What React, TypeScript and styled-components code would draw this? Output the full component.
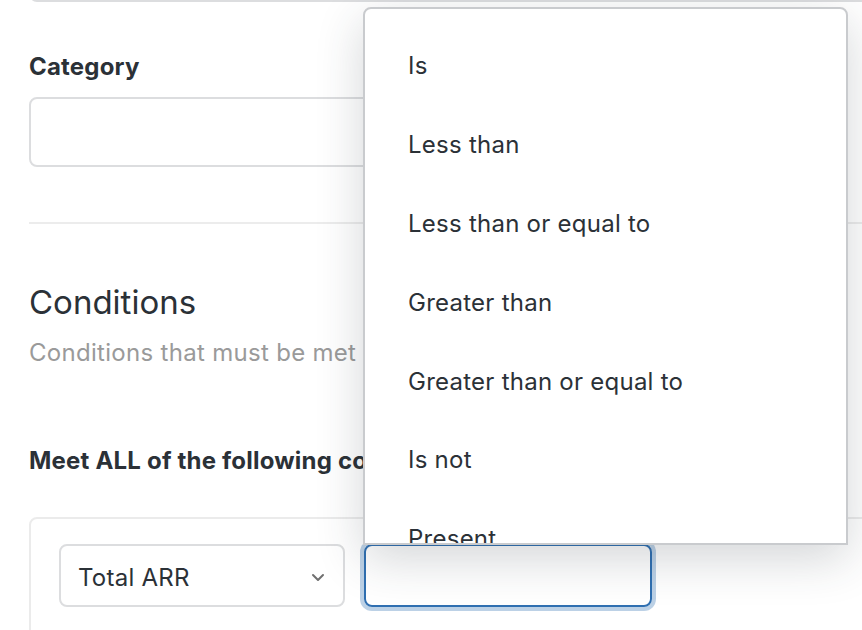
import React from "react";
import styled, { createGlobalStyle } from "styled-components";

const Global = createGlobalStyle`
  html, body { margin: 0; padding: 0; background: #ffffff; }
  body { font-family: "Inter", "Noto Sans", "Liberation Sans", sans-serif; color: #2b3137; overflow: hidden; }
`;

const Screen = styled.div`
  position: relative;
  width: 862px;
  height: 630px;
  overflow: hidden;
`;

const Page = styled.div`
  display: flex;
  flex-direction: column;
  padding-left: 29px;
`;

const TextBox = styled.div<{ $w?: number; $h: number; $mt?: number }>`
  box-sizing: border-box;
  width: ${(p) => (p.$w ? `${p.$w}px` : "1000px")};
  height: ${(p) => p.$h}px;
  margin-top: ${(p) => p.$mt ?? 0}px;
  border: 2px solid #dcdddf;
  border-radius: 8px;
  background: #fff;
  flex-shrink: 0;
`;

const FieldLabel = styled.div<{ $mt: number }>`
  margin-top: ${(p) => p.$mt}px;
  font-size: 24px;
  letter-spacing: 0.2px;
  line-height: 30px;
  font-weight: 700;
  color: #2b3137;
  white-space: nowrap;
`;

const Divider = styled.hr`
  margin: 55px 0 0;
  border: 0;
  height: 2px;
  width: 1000px;
  background: #ececec;
`;

const Heading = styled.h2`
  margin: 57px 0 0;
  font-size: 33px;
  line-height: 42px;
  font-weight: 400;
  color: #2b3137;
`;

const Subtitle = styled.p`
  margin: 15px 0 0;
  font-size: 24px;
  letter-spacing: 0.3px;
  line-height: 30px;
  color: #9a9a9a;
`;

const Card = styled.div`
  box-sizing: border-box;
  margin-top: 41px;
  width: 1000px;
  height: 200px;
  border: 2px solid #ebebeb;
  border-radius: 8px;
  padding: 25px 28px;
  display: flex;
  gap: 19px;
`;

const Select = styled.div`
  box-sizing: border-box;
  width: 286px;
  height: 63px;
  border: 2px solid #dcdddf;
  border-radius: 8px;
  display: flex;
  align-items: center;
  justify-content: space-between;
  padding: 3px 18px 0 17px;
  font-size: 24px;
  letter-spacing: 0.25px;
  color: #2b3137;
`;

const ValueInput = styled.div`
  box-sizing: border-box;
  width: 288px;
  height: 63px;
  border: 2px solid #2f6fb1;
  border-radius: 8px;
  box-shadow: 0 0 0 4px rgba(47, 111, 177, 0.32);
`;

const Menu = styled.ul`
  position: absolute;
  top: 7px;
  left: 363px;
  box-sizing: border-box;
  width: 485px;
  height: 538px;
  margin: 0;
  padding: 17px 0 0;
  list-style: none;
  background: #fff;
  border: 2px solid #c9cbce;
  border-radius: 8px 8px 0 0;
  overflow: hidden;
  box-shadow: 0 14px 48px rgba(40, 50, 60, 0.2);
`;

const MenuItem = styled.li`
  height: 78.9px;
  display: flex;
  align-items: center;
  padding-left: 43px;
  font-size: 24px;
  letter-spacing: 0.25px;
  color: #2b3137;
  white-space: nowrap;
`;

const Chevron = () => (
  <svg width="14" height="9" viewBox="0 0 14 9" fill="none">
    <path d="M2 2l5 5 5-5" stroke="#707070" strokeWidth="2" strokeLinecap="round" strokeLinejoin="round" />
  </svg>
);

const options = [
  "Is",
  "Less than",
  "Less than or equal to",
  "Greater than",
  "Greater than or equal to",
  "Is not",
  "Present",
];

export default function App() {
  return (
    <Screen>
      <Global />
      <Page>
        <TextBox $h={50} $mt={-48} />
        <FieldLabel $mt={50}>Category</FieldLabel>
        <TextBox $h={70} $w={600} $mt={15} />
        <Divider />
        <Heading>Conditions</Heading>
        <Subtitle>Conditions that must be met</Subtitle>
        <FieldLabel $mt={78}>Meet ALL of the following conditions</FieldLabel>
        <Card>
          <Select>
            <span>Total ARR</span>
            <Chevron />
          </Select>
          <ValueInput />
        </Card>
      </Page>
      <Menu>
        {options.map((o) => (
          <MenuItem key={o}>{o}</MenuItem>
        ))}
      </Menu>
    </Screen>
  );
}
